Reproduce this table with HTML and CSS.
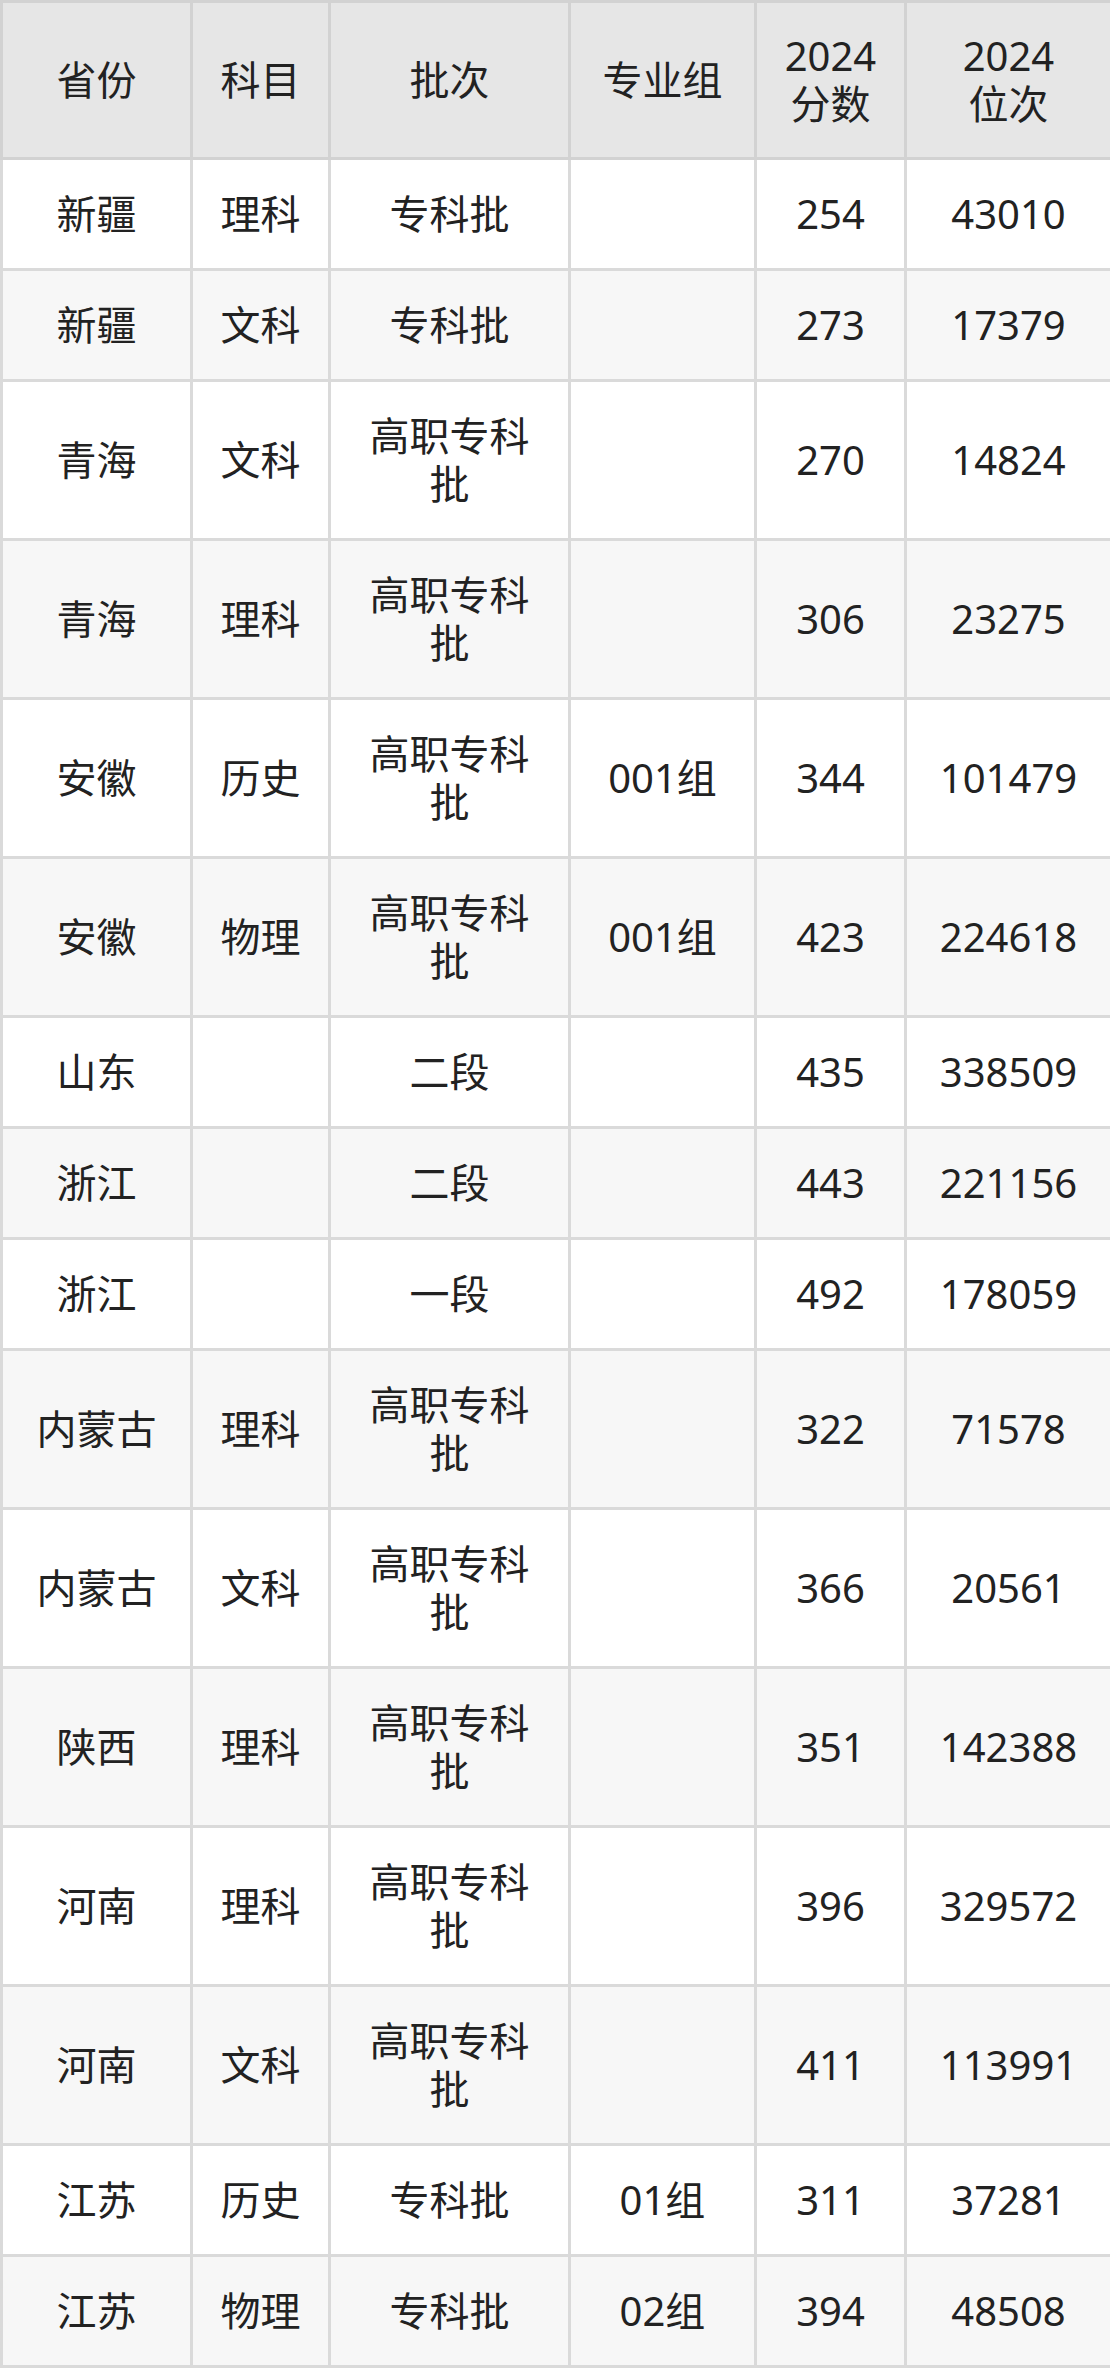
FILE: index.html
```html
<!DOCTYPE html>
<html lang="zh-CN">
<head>
<meta charset="utf-8">
<title>2024 分数位次</title>
<link rel="stylesheet" href="styles.css">
</head>
<body>
<table class="score-table">
  <colgroup>
    <col class="c-prov">
    <col class="c-subj">
    <col class="c-batch">
    <col class="c-group">
    <col class="c-score">
    <col class="c-rank">
  </colgroup>
  <thead>
    <tr>
      <th>省份</th>
      <th>科目</th>
      <th>批次</th>
      <th>专业组</th>
      <th>2024<br>分数</th>
      <th>2024<br>位次</th>
    </tr>
  </thead>
  <tbody>
    <tr><td>新疆</td><td>理科</td><td>专科批</td><td></td><td>254</td><td>43010</td></tr>
    <tr><td>新疆</td><td>文科</td><td>专科批</td><td></td><td>273</td><td>17379</td></tr>
    <tr><td>青海</td><td>文科</td><td>高职专科批</td><td></td><td>270</td><td>14824</td></tr>
    <tr><td>青海</td><td>理科</td><td>高职专科批</td><td></td><td>306</td><td>23275</td></tr>
    <tr><td>安徽</td><td>历史</td><td>高职专科批</td><td>001组</td><td>344</td><td>101479</td></tr>
    <tr><td>安徽</td><td>物理</td><td>高职专科批</td><td>001组</td><td>423</td><td>224618</td></tr>
    <tr><td>山东</td><td></td><td>二段</td><td></td><td>435</td><td>338509</td></tr>
    <tr><td>浙江</td><td></td><td>二段</td><td></td><td>443</td><td>221156</td></tr>
    <tr><td>浙江</td><td></td><td>一段</td><td></td><td>492</td><td>178059</td></tr>
    <tr><td>内蒙古</td><td>理科</td><td>高职专科批</td><td></td><td>322</td><td>71578</td></tr>
    <tr><td>内蒙古</td><td>文科</td><td>高职专科批</td><td></td><td>366</td><td>20561</td></tr>
    <tr><td>陕西</td><td>理科</td><td>高职专科批</td><td></td><td>351</td><td>142388</td></tr>
    <tr><td>河南</td><td>理科</td><td>高职专科批</td><td></td><td>396</td><td>329572</td></tr>
    <tr><td>河南</td><td>文科</td><td>高职专科批</td><td></td><td>411</td><td>113991</td></tr>
    <tr><td>江苏</td><td>历史</td><td>专科批</td><td>01组</td><td>311</td><td>37281</td></tr>
    <tr><td>江苏</td><td>物理</td><td>专科批</td><td>02组</td><td>394</td><td>48508</td></tr>
  </tbody>
</table>
</body>
</html>
```

FILE: styles.css
```css
html, body {
  margin: 0;
  padding: 0;
  background: #ffffff;
}

.score-table {
  width: 1110px;
  table-layout: fixed;
  border-collapse: collapse;
  font-family: "Noto Sans", "Noto Sans CJK SC", sans-serif;
  font-size: 40px;
  line-height: 48px;
  color: #222222;
}

.c-prov { width: 190px; }
.c-subj { width: 138px; }
.c-batch { width: 240px; }
.c-group { width: 186px; }
.c-score { width: 150px; }
.c-rank { width: 206px; }

.score-table th,
.score-table td {
  border: 3px solid #dadada;
  padding: 30px 22px;
  text-align: center;
  vertical-align: middle;
  font-weight: 400;
}

.score-table th {
  background: #e6e6e6;
  border-color: #d2d2d2;
  padding-top: 29px;
  padding-bottom: 29px;
}

.score-table tbody tr:nth-child(odd) td {
  background: #ffffff;
}

.score-table tbody tr:nth-child(even) td {
  background: #f7f7f7;
}
```
